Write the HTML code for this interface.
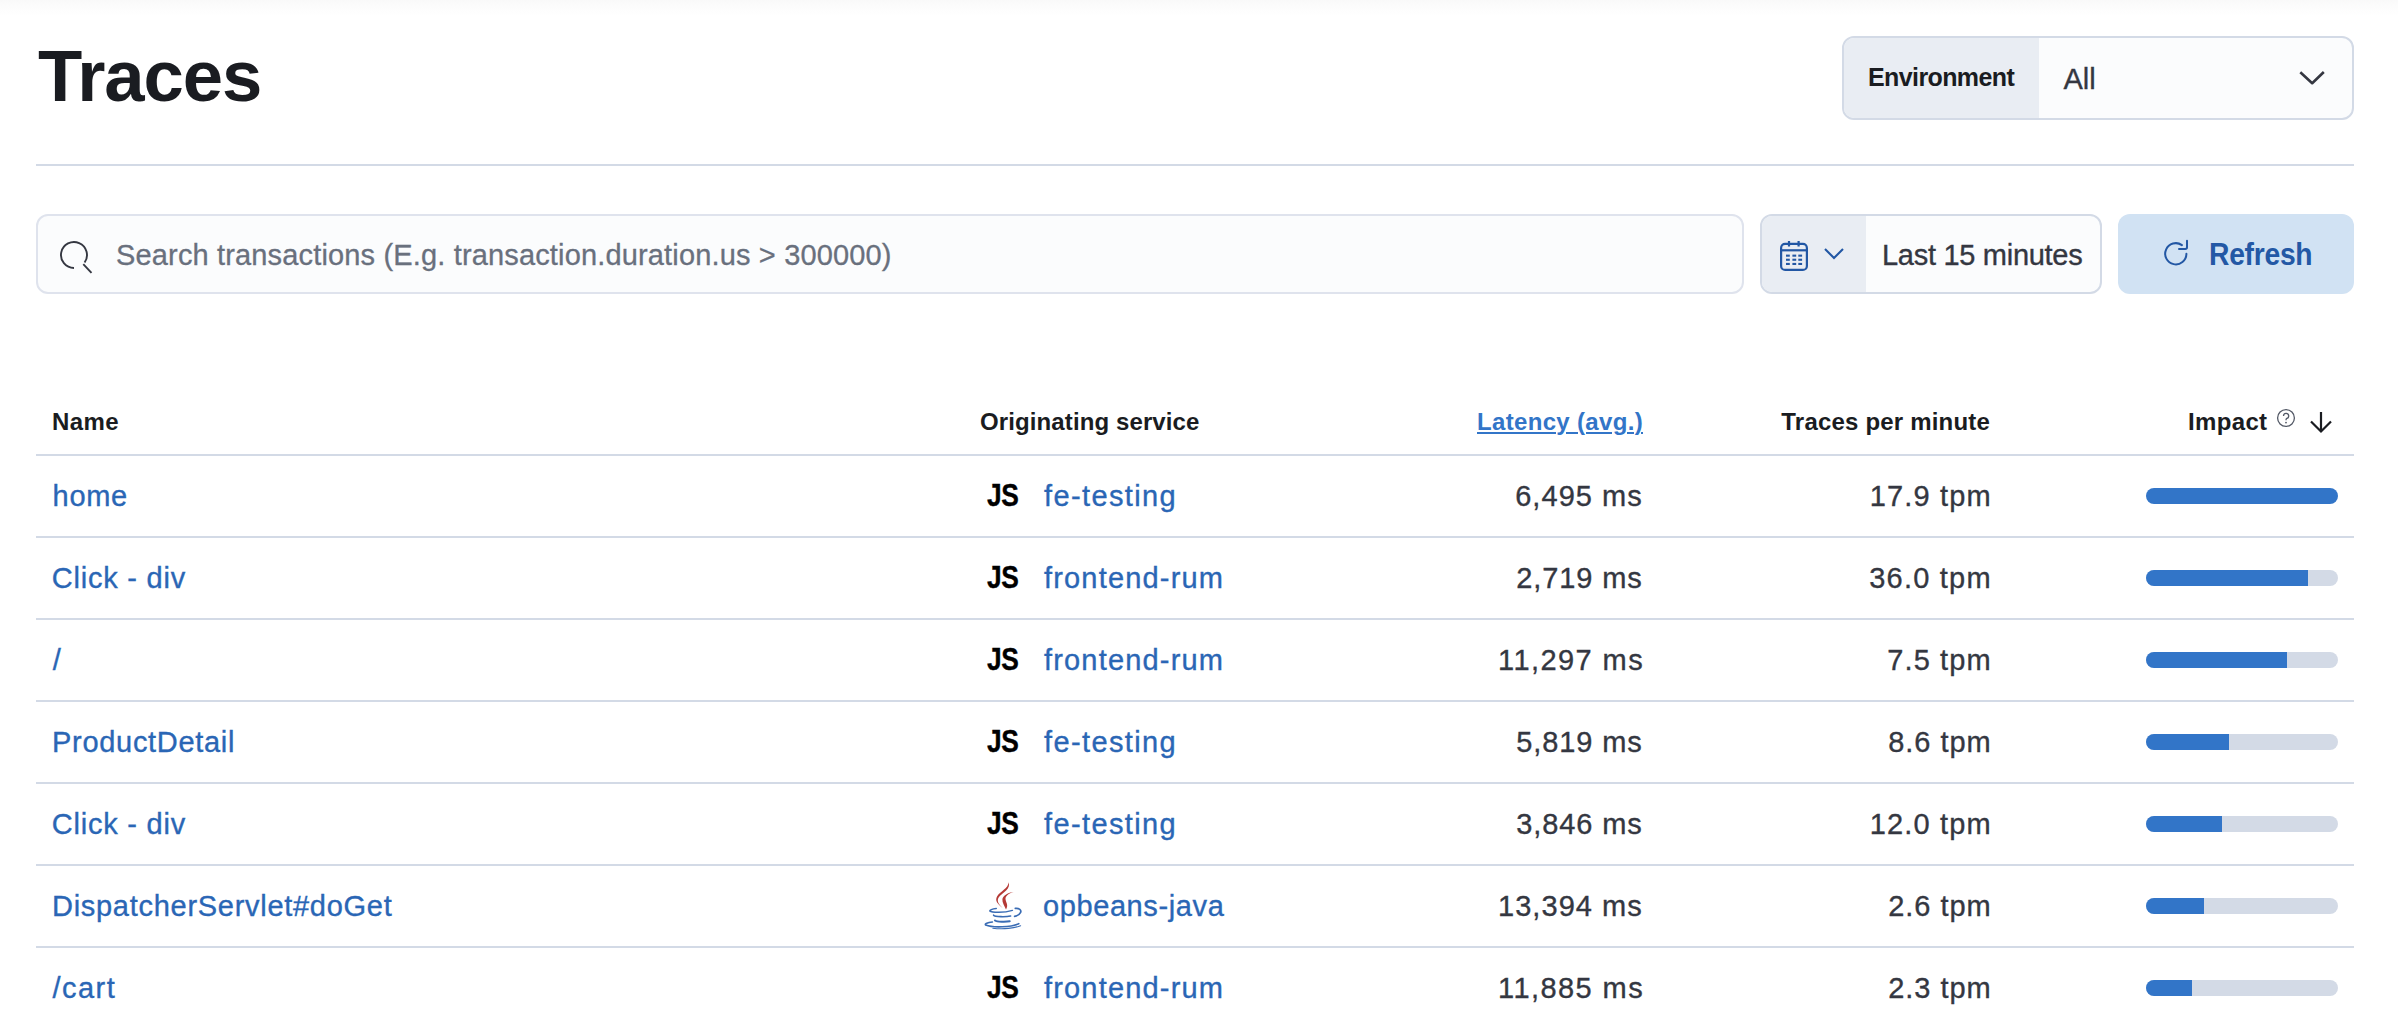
<!DOCTYPE html>
<html><head><meta charset="utf-8">
<style>
html,body{margin:0;padding:0;}
body{width:2398px;height:1028px;overflow:hidden;background:#fff;position:relative;font-family:"Liberation Sans",sans-serif;color:#343741;}
.a{position:absolute;white-space:nowrap;}
.shadow{left:0;top:0;width:2398px;height:16px;background:linear-gradient(#f9f9f9,#fcfcfc 40%,#fff);}
.title{font-size:72.5px;font-weight:700;color:#1a1c21;line-height:72px;letter-spacing:-1.1px;}
.box{box-sizing:border-box;border:2px solid #d3dae6;border-radius:12px;background:#fbfcfd;overflow:hidden;}
.lbl{position:absolute;top:0;bottom:0;left:0;background:#e9edf3;}
.hr{height:2px;background:#d3dae6;}
.th{font-size:24px;font-weight:700;color:#1a1c21;line-height:24px;}
.td{font-size:29px;line-height:29px;color:#343741;letter-spacing:0.9px;-webkit-text-stroke:0.35px currentColor;}
.lk{color:#2a66b5;}
.js{font-size:31px;font-weight:700;color:#000;line-height:31px;letter-spacing:-0.5px;transform:scaleX(0.85);transform-origin:0 0;-webkit-text-stroke:0.4px #000;}
.bar{box-sizing:border-box;height:16px;border-radius:8px;background:#d3dae6;overflow:hidden;left:2146px;width:192px;}
.bar i{display:block;height:16px;background:#3275c8;}
</style></head><body>
<div class="a shadow"></div>
<div class="a title" style="left:38px;top:39.5px;">Traces</div>

<div class="a box" style="left:1842px;top:36px;width:512px;height:84px;">
  <div class="lbl" style="width:195px;"></div>
</div>
<div class="a" style="left:1868px;top:65px;font-size:25px;line-height:25px;font-weight:700;color:#1a1c21;letter-spacing:-0.6px;">Environment</div>
<div class="a" style="left:2063.5px;top:65px;font-size:29px;line-height:29px;color:#343741;-webkit-text-stroke:0.35px #343741;">All</div>
<svg class="a" style="left:2296px;top:66px;" width="34" height="24" viewBox="0 0 34 24"><path d="M4.3 6.2 L16.2 17.2 L27.8 6" fill="none" stroke="#343741" stroke-width="2.6" stroke-linejoin="round"/></svg>

<div class="a hr" style="left:36px;top:164px;width:2318px;"></div>

<div class="a box" style="left:36px;top:214px;width:1708px;height:80px;border-color:#dfe3ed;"></div>
<svg class="a" style="left:56px;top:236px;" width="40" height="40" viewBox="0 0 40 40"><path d="M18 32 A13 13 0 1 1 28.6 26.5" fill="none" stroke="#343741" stroke-width="1.9"/><path d="M27.3 28.2 L35.5 36.8" fill="none" stroke="#343741" stroke-width="1.9"/></svg>
<div class="a" style="left:116px;top:241px;font-size:29px;line-height:29px;color:#69707d;letter-spacing:0.155px;-webkit-text-stroke:0.3px #69707d;">Search transactions (E.g. transaction.duration.us &gt; 300000)</div>

<div class="a box" style="left:1760px;top:214px;width:342px;height:80px;">
  <div class="lbl" style="width:104px;"></div>
</div>
<svg class="a" style="left:1776px;top:238px;" width="36" height="36" viewBox="0 0 36 36"><g fill="none" stroke="#2257a4" stroke-width="2.2"><rect x="5.1" y="5.9" width="25.8" height="26" rx="4"/><path d="M5 12.3 H31"/><path d="M13 3 V8.5 M22.6 3 V8.5"/></g><g fill="#2257a4"><rect x="10" y="16.6" width="3.8" height="2.1"/><rect x="16.4" y="16.6" width="3.8" height="2.1"/><rect x="22.3" y="16.6" width="3.8" height="2.1"/><rect x="10" y="20.7" width="3.8" height="2.1"/><rect x="16.4" y="20.7" width="3.8" height="2.1"/><rect x="22.3" y="20.7" width="3.8" height="2.1"/><rect x="10" y="24.9" width="3.8" height="2.1"/><rect x="16.4" y="24.9" width="3.8" height="2.1"/><rect x="22.3" y="24.9" width="3.8" height="2.1"/></g></svg>
<svg class="a" style="left:1820px;top:244px;" width="28" height="20" viewBox="0 0 28 20"><path d="M5 5 L14 14 L23 5" fill="none" stroke="#2257a4" stroke-width="2.1"/></svg>
<div class="a" style="left:1882px;top:241px;font-size:29px;line-height:29px;color:#343741;letter-spacing:-0.29px;-webkit-text-stroke:0.35px #343741;">Last 15 minutes</div>

<div class="a" style="left:2118px;top:214px;width:236px;height:80px;border-radius:12px;background:#d1e2f3;"></div>
<svg class="a" style="left:2160px;top:236px;" width="34" height="34" viewBox="0 0 34 34"><path d="M21.9 9.1 A10.6 10.6 0 1 0 26.4 17.8" fill="none" stroke="#2257a4" stroke-width="2" stroke-linecap="round"/><path d="M27 4.8 V11.3 Q27 13 25.3 13 H19" fill="none" stroke="#2257a4" stroke-width="2" stroke-linecap="round"/></svg>
<div class="a" style="left:2209px;top:239px;font-size:30.5px;line-height:30px;font-weight:700;color:#2358a5;letter-spacing:-0.3px;transform:scaleX(0.927);transform-origin:0 0;">Refresh</div>

<!-- table header -->
<div class="a th" style="left:52px;top:410px;letter-spacing:0.45px;">Name</div>
<div class="a th" style="left:980px;top:410px;letter-spacing:0.11px;">Originating service</div>
<div class="a th" style="right:755px;top:410px;letter-spacing:0.33px;color:#3275c8;text-decoration:underline;text-decoration-thickness:2px;text-underline-offset:2px;">Latency (avg.)</div>
<div class="a th" style="right:408px;top:410px;letter-spacing:0.19px;">Traces per minute</div>
<div class="a th" style="left:2188px;top:410px;letter-spacing:0.35px;">Impact</div>
<svg class="a" style="left:2274px;top:406px;" width="24" height="24" viewBox="0 0 24 24"><circle cx="12" cy="12" r="8.4" fill="none" stroke="#535966" stroke-width="1.3"/><path d="M9.5 10 A2.6 2.6 0 1 1 12.6 12.5 Q12 12.9 12 14.2" fill="none" stroke="#535966" stroke-width="1.3"/><circle cx="12" cy="16.6" r="0.9" fill="#535966"/></svg>
<svg class="a" style="left:2306px;top:408px;" width="30" height="28" viewBox="0 0 30 28"><path d="M15 4 V23 M5 13.5 L15 23.5 L25 13.5" fill="none" stroke="#1a1c21" stroke-width="2.2"/></svg>

<div class="a hr" style="left:36px;top:454px;width:2318px;"></div>
<div class="a hr" style="left:36px;top:536px;width:2318px;"></div>
<div class="a hr" style="left:36px;top:618px;width:2318px;"></div>
<div class="a hr" style="left:36px;top:700px;width:2318px;"></div>
<div class="a hr" style="left:36px;top:782px;width:2318px;"></div>
<div class="a hr" style="left:36px;top:864px;width:2318px;"></div>
<div class="a hr" style="left:36px;top:946px;width:2318px;"></div>

<!-- rows -->
<div id="n0" class="a td lk" style="left:52.60px;top:482px;letter-spacing:0.700px">home</div>
<div class="a js" style="left:986.5px;top:480px;">JS</div>
<div id="s0" class="a td lk" style="left:1044.00px;top:482px;letter-spacing:1.378px">fe-testing</div>
<div id="l0" class="a td" style="left:1515.20px;top:482px;letter-spacing:1.043px">6,495 ms</div>
<div id="t0" class="a td" style="left:1869.70px;top:482px;letter-spacing:1.157px">17.9 tpm</div>
<div class="a bar" style="top:488px;"><i style="width:192px"></i></div>

<div id="n1" class="a td lk" style="left:51.80px;top:564px;letter-spacing:0.770px">Click - div</div>
<div class="a js" style="left:986.5px;top:562px;">JS</div>
<div id="s1" class="a td lk" style="left:1044.00px;top:564px;letter-spacing:1.173px">frontend-rum</div>
<div id="l1" class="a td" style="left:1516.20px;top:564px;letter-spacing:0.900px">2,719 ms</div>
<div id="t1" class="a td" style="left:1869.20px;top:564px;letter-spacing:1.229px">36.0 tpm</div>
<div class="a bar" style="top:570px;"><i style="width:162px"></i></div>

<div id="n2" class="a td lk" style="left:52.70px;top:646px;letter-spacing:5.700px">/</div>
<div class="a js" style="left:986.5px;top:644px;">JS</div>
<div id="s2" class="a td lk" style="left:1044.00px;top:646px;letter-spacing:1.173px">frontend-rum</div>
<div id="l2" class="a td" style="left:1498.00px;top:646px;letter-spacing:1.425px">11,297 ms</div>
<div id="t2" class="a td" style="left:1887.30px;top:646px;letter-spacing:1.100px">7.5 tpm</div>
<div class="a bar" style="top:652px;"><i style="width:141px"></i></div>

<div id="n3" class="a td lk" style="left:52.10px;top:728px;letter-spacing:0.683px">ProductDetail</div>
<div class="a js" style="left:986.5px;top:726px;">JS</div>
<div id="s3" class="a td lk" style="left:1044.00px;top:728px;letter-spacing:1.378px">fe-testing</div>
<div id="l3" class="a td" style="left:1516.20px;top:728px;letter-spacing:0.900px">5,819 ms</div>
<div id="t3" class="a td" style="left:1888.30px;top:728px;letter-spacing:0.933px">8.6 tpm</div>
<div class="a bar" style="top:734px;"><i style="width:83px"></i></div>

<div id="n4" class="a td lk" style="left:51.80px;top:810px;letter-spacing:0.770px">Click - div</div>
<div class="a js" style="left:986.5px;top:808px;">JS</div>
<div id="s4" class="a td lk" style="left:1044.00px;top:810px;letter-spacing:1.378px">fe-testing</div>
<div id="l4" class="a td" style="left:1516.20px;top:810px;letter-spacing:0.900px">3,846 ms</div>
<div id="t4" class="a td" style="left:1869.70px;top:810px;letter-spacing:1.157px">12.0 tpm</div>
<div class="a bar" style="top:816px;"><i style="width:76px"></i></div>

<div id="n5" class="a td lk" style="left:52.00px;top:892px;letter-spacing:0.714px">DispatcherServlet#doGet</div>
<svg class="a" style="left:975px;top:875px;" width="55" height="60" viewBox="0 0 55 60"><g fill="#b53a36"><path d="M33.6 7.2 C36 13.5 28.3 17.6 24.8 21 C21.8 24 21.8 27.8 27.6 33 C22.6 28.8 19.4 25.6 22.3 21 C25.3 16.4 33.6 13 33.6 7.2 Z"/><path d="M38.6 16.9 C33.6 18.2 30.2 21 30.5 24 C30.8 27.5 33.8 30 31 34.4 C29.4 30.5 27.1 28 27.4 24.3 C27.7 20.4 33.4 17.4 38.6 16.9 Z"/></g><g fill="none" stroke="#3a6cb4" stroke-linecap="round"><path d="M21.3 33.4 C18 33.8 15 34.8 14.8 35.9 C17 37.8 29 38 37.4 35.4" stroke-width="1.5"/><path d="M18.6 40.2 C20 42 31 42 35.6 41" stroke-width="1.6"/><path d="M20 45.5 C22 47 31 47 34.7 46.3" stroke-width="2.1"/><path d="M40.3 33.4 C44.2 33 46.6 35 45.6 37.4 C44.6 39.6 42 41 39.6 41.4" stroke-width="1.7"/><path d="M17.4 47 C12.5 47.5 9.5 48.6 10.6 50 C18 53 36 52.2 43.8 48.7" stroke-width="1.6"/><path d="M17.8 53.2 C28 54.6 40 53.2 45.6 50.7" stroke-width="1.1"/></g></svg>
<div id="s5" class="a td lk" style="left:1042.90px;top:892px;letter-spacing:0.618px">opbeans-java</div>
<div id="l5" class="a td" style="left:1498.00px;top:892px;letter-spacing:1.050px">13,394 ms</div>
<div id="t5" class="a td" style="left:1888.30px;top:892px;letter-spacing:0.933px">2.6 tpm</div>
<div class="a bar" style="top:898px;"><i style="width:58px"></i></div>

<div id="n6" class="a td lk" style="left:52.50px;top:974px;letter-spacing:1.475px">/cart</div>
<div class="a js" style="left:986.5px;top:972px;">JS</div>
<div id="s6" class="a td lk" style="left:1044.00px;top:974px;letter-spacing:1.173px">frontend-rum</div>
<div id="l6" class="a td" style="left:1498.00px;top:974px;letter-spacing:1.425px">11,885 ms</div>
<div id="t6" class="a td" style="left:1888.30px;top:974px;letter-spacing:0.933px">2.3 tpm</div>
<div class="a bar" style="top:980px;"><i style="width:46px"></i></div>

</body></html>
